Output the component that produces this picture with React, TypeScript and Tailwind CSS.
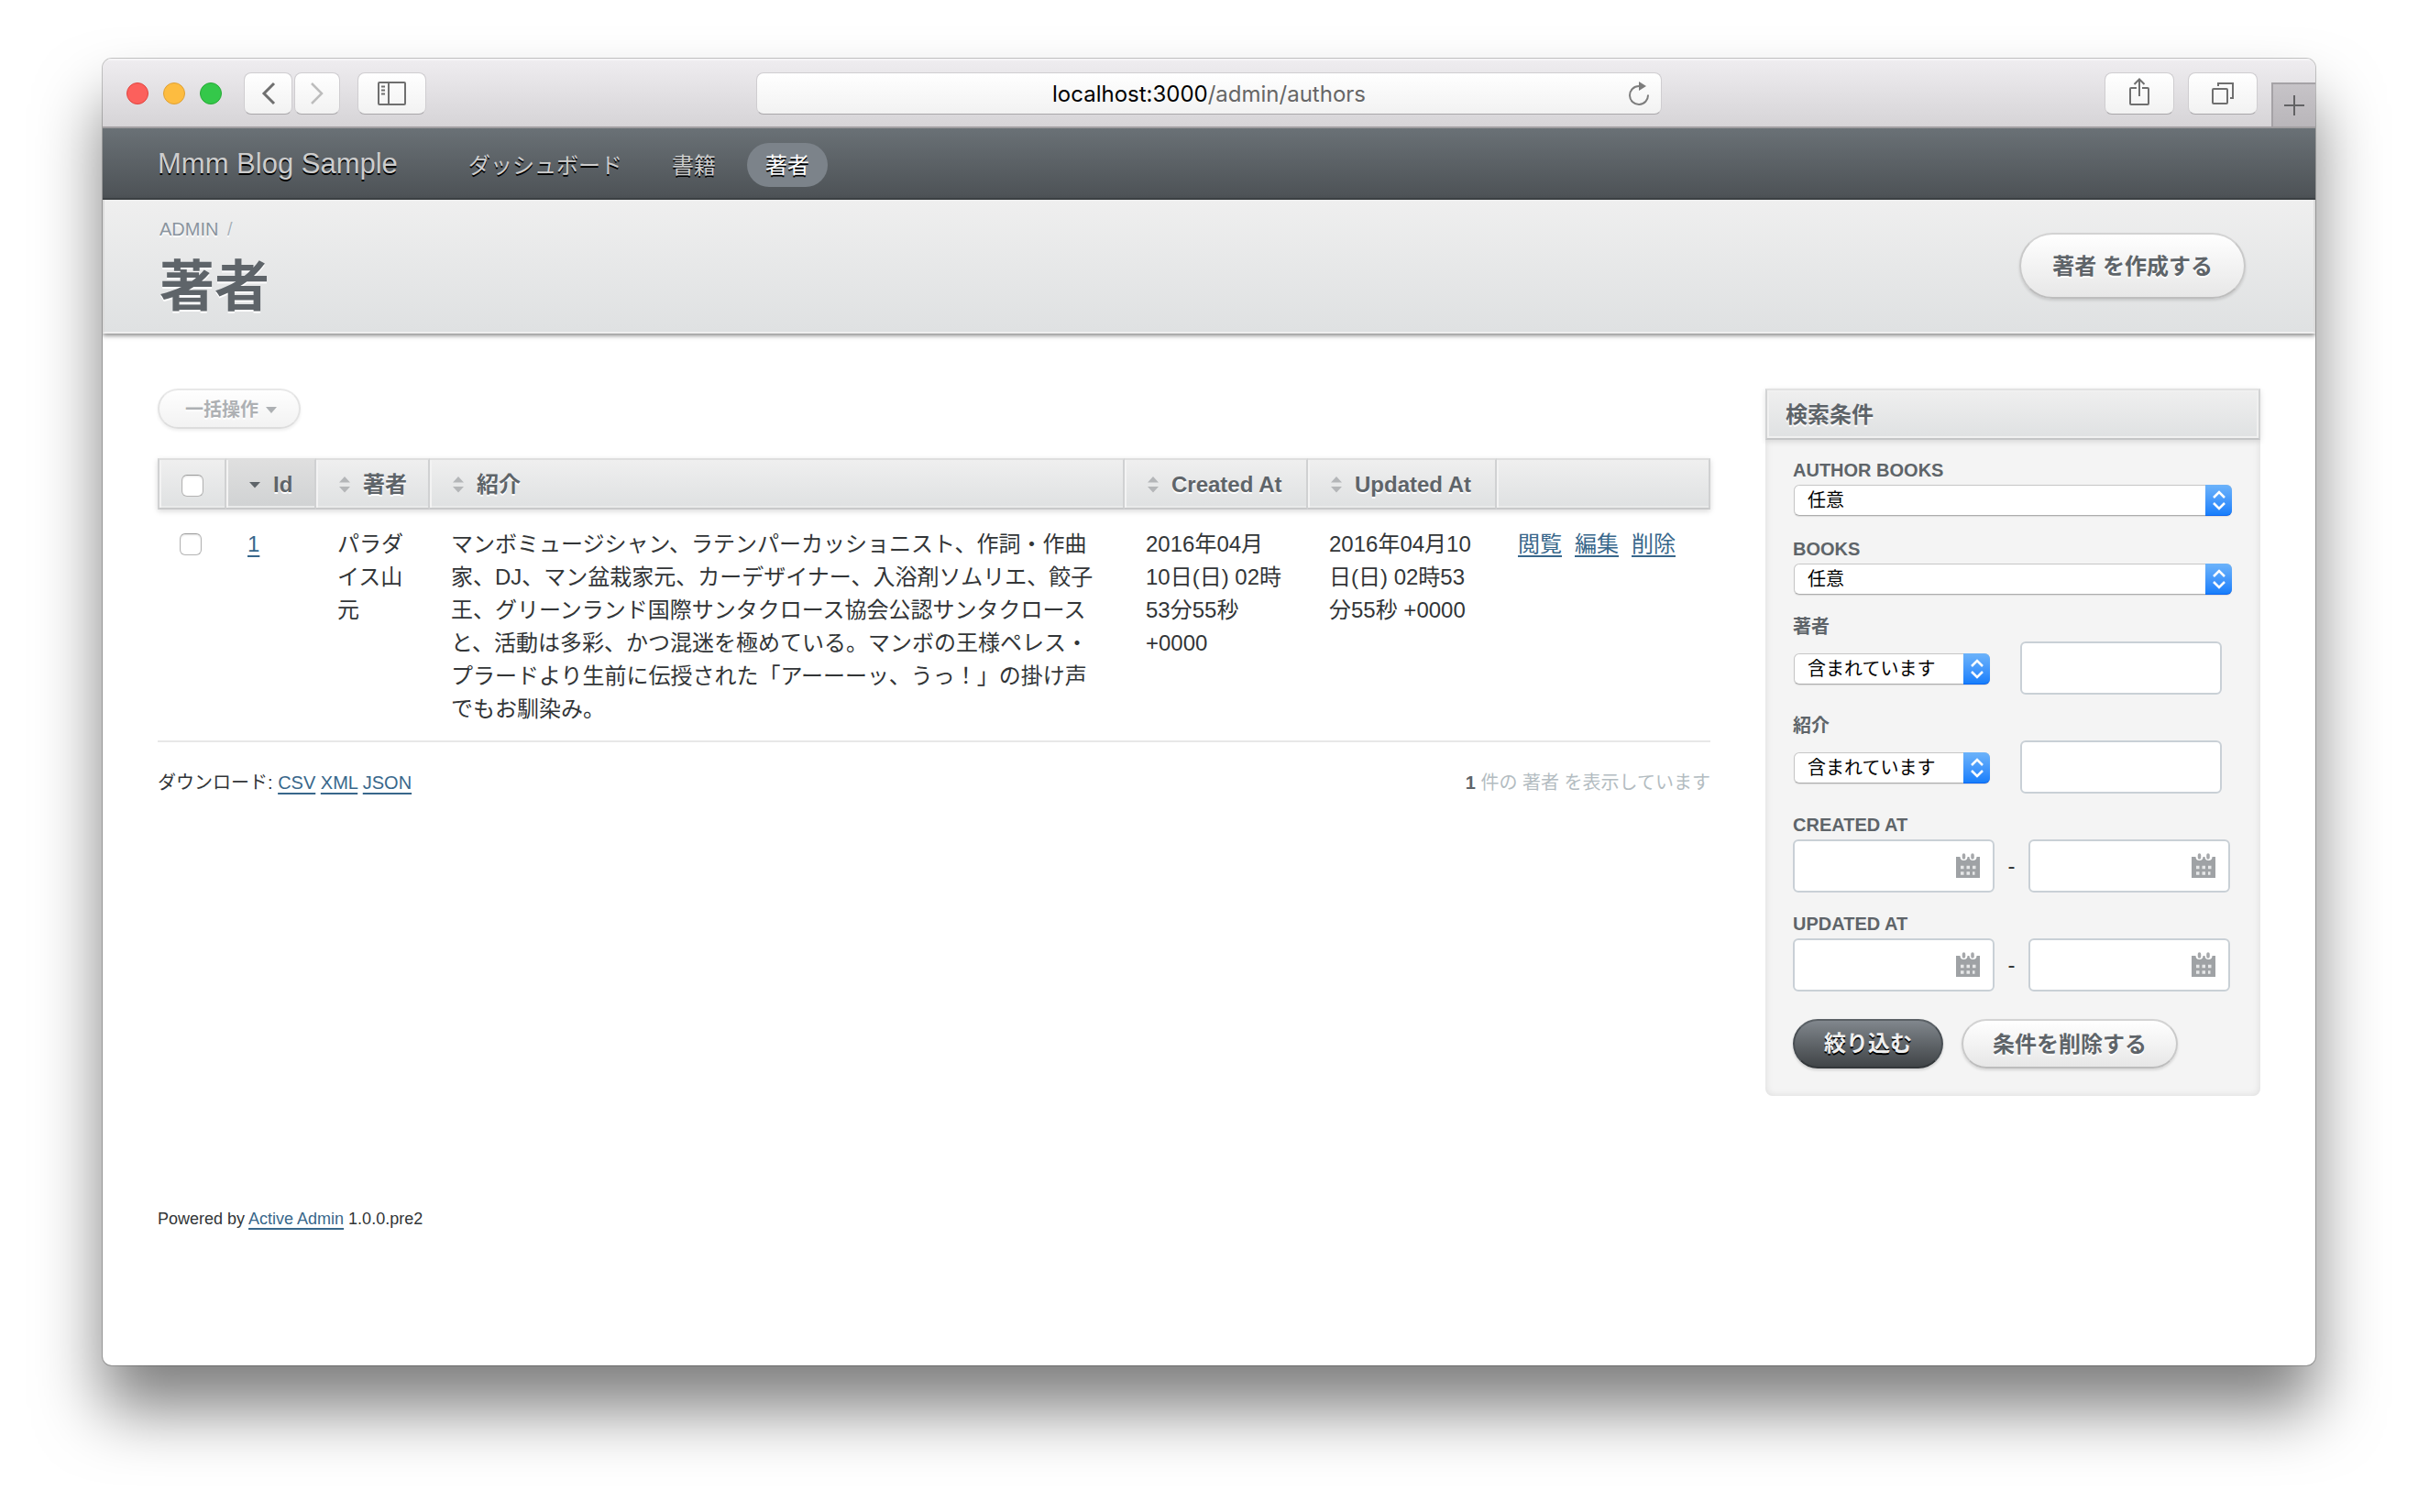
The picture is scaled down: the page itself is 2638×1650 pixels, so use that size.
import React from "react";

const toolButton =
  "flex h-[46px] items-center justify-center rounded-lg border border-[#cfcdd0] border-b-[#a9a7aa] bg-linear-to-b from-white to-[#f2f2f2] text-[#6f6f6f]";

const pill =
  "rounded-full border-2 border-[#c9c9c9] border-t-[#d3d3d3] border-b-[#bdbdbd] bg-linear-to-b from-white to-[#e7e7e7] pt-0.5 font-bold text-[#5e6469] shadow-[0_2px_3px_rgba(0,0,0,0.12)] [text-shadow:0_2px_0_#fff]";

const link = "text-[#38678b] underline decoration-2 underline-offset-4";

const barGradient = "bg-linear-to-b from-[#efefef] to-[#dfe1e2]";

function BrowserBar() {
  return (
    <div className="flex h-[76px] items-center border-b-2 border-[#a19ea1] bg-linear-to-b from-[#efedf0] to-[#d6d4d7] pt-0.5 shadow-[inset_0_2px_0_#f6f5f7]">
      <div className="flex flex-1 items-center">
        <div className="ml-[26px] flex gap-4">
          <span className="size-6 rounded-full border border-[#e0443e] bg-[#fc605c]" />
          <span className="size-6 rounded-full border border-[#dea034] bg-[#fdbc40]" />
          <span className="size-6 rounded-full border border-[#27aa35] bg-[#34c84a]" />
        </div>
        <div className="ml-6 flex gap-0.5">
          <button aria-label="Back" className={`${toolButton} w-[53px]`}>
            <svg width="16" height="26" viewBox="0 0 16 26" fill="none" stroke="currentColor" strokeWidth="3">
              <path d="M14 2 3 13l11 11" />
            </svg>
          </button>
          <button aria-label="Forward" className={`${toolButton} w-[50px]`}>
            <svg width="16" height="26" viewBox="0 0 16 26" fill="none" stroke="#bdbdbd" strokeWidth="2.5">
              <path d="m2 2 11 11L2 24" />
            </svg>
          </button>
        </div>
        <button aria-label="Sidebar" className={`${toolButton} ml-[19px] w-[75px]`}>
          <svg width="32" height="26" viewBox="0 0 32 26" fill="none" stroke="currentColor" strokeWidth="2">
            <rect x="1" y="1" width="29" height="24" rx="1" />
            <path d="M12 1v24M4 5.500h4M4 9.500h4M4 13.500h4" />
          </svg>
        </button>
      </div>
      <div className={`${toolButton} w-[988px] pr-3`}>
        <span className="flex-1 pt-0.5 pl-9 text-center font-[Inter,'Liberation_Sans',sans-serif] text-2xl text-[#666]">
          <span className="text-black">localhost:3000</span>/admin/authors
        </span>
        <button aria-label="Reload">
          <svg width="24" height="28" viewBox="0 0 24 28" fill="none" stroke="#7d7d7d" strokeWidth="2">
            <path d="M22 15.500A10 10 0 1 1 12 6" />
            <path d="M12 1v10l8-5z" fill="#7d7d7d" stroke="none" />
          </svg>
        </button>
      </div>
      <div className="flex flex-1 items-center justify-end self-stretch">
        <button aria-label="Share" className={`${toolButton} w-[76px]`}>
          <svg width="24" height="32" viewBox="0 0 24 32" fill="none" stroke="currentColor" strokeWidth="2" className="mb-1">
            <path d="M9 12H3a1 1 0 0 0-1 1v16a1 1 0 0 0 1 1h18a1 1 0 0 0 1-1V13a1 1 0 0 0-1-1h-6M12 21V2M6.500 8 12 2.500 17.500 8" />
          </svg>
        </button>
        <button aria-label="Show tabs" className={`${toolButton} mx-[15px] w-[76px]`}>
          <svg width="26" height="26" viewBox="0 0 26 26" fill="none" stroke="currentColor" strokeWidth="2">
            <rect x="2" y="8" width="16" height="16" rx="1" />
            <path d="M8 5V2h16v16h-3" />
          </svg>
        </button>
        <button
          aria-label="New tab"
          className="flex size-12 items-center justify-center self-end border-t-2 border-l-2 border-[#a5a2a6] bg-linear-to-b from-[#c6c3c7] to-[#b9b6ba]"
        >
          <svg width="22" height="22" viewBox="0 0 22 22" stroke="#626264" strokeWidth="2">
            <path d="M11 0v22M0 11h22" />
          </svg>
        </button>
      </div>
    </div>
  );
}

function NavBar() {
  const item = "flex h-12 items-center rounded-full px-5 pt-0.5 text-2xl";
  return (
    <header className="flex h-[78px] items-center border-b-2 border-[#3f4448] bg-linear-to-b from-[#6a7176] to-[#4d5256] px-[60px] pt-0.5 text-[#cdcdcd] [text-shadow:0_2px_0_#000]">
      <h1 className="w-[319px] text-[31px] leading-9">Mmm Blog Sample</h1>
      <nav className="flex gap-3.5 pt-0.5">
        <a href="#dashboard" className={item}>ダッシュボード</a>
        <a href="#books" className={item}>書籍</a>
        <a href="#authors" className={`${item} bg-[#7c838a] text-white`}>著者</a>
      </nav>
    </header>
  );
}

function TitleBar() {
  return (
    <div
      className={`relative flex h-[146px] items-center justify-between border-x-2 border-b-2 border-x-[#dcdcdc] border-b-[#efefef] px-[58px] shadow-[0_2px_5px_rgba(0,0,0,0.5)] ${barGradient}`}
    >
      <div className="pt-2 pl-0.5 [text-shadow:0_2px_0_#fff]">
        <div className="text-xl leading-6 text-[#8a949e]">
          <a href="#admin">ADMIN</a> <span className="pl-1 text-[#aab2ba]">/</span>
        </div>
        <h2 className="pt-4 text-[60px] leading-[72px] font-bold text-[#5e6469]">著者</h2>
      </div>
      <button className={`${pill} mr-4 h-[72px] px-[34px] text-2xl`}>著者 を作成する</button>
    </div>
  );
}

function SortIcon({ sorted }: { sorted?: boolean }) {
  return sorted ? (
    <svg width="12" height="18" viewBox="0 0 12 18" fill="#5e6469" aria-hidden="true">
      <path d="M0 6h12L6 12.500z" />
    </svg>
  ) : (
    <svg width="12" height="18" viewBox="0 0 12 18" fill="#b4b6b8" aria-hidden="true">
      <path d="M0 6.500h12L6 0zM0 11h12l-6 6.500z" />
    </svg>
  );
}

function Checkbox({ label }: { label: string }) {
  return (
    <input
      type="checkbox"
      aria-label={label}
      className="block size-6 appearance-none rounded-md border border-[#b4b4b4] border-t-[#9c9c9c] bg-white shadow-[inset_0_1px_2px_rgba(0,0,0,0.12)]"
    />
  );
}

const columns = [
  { name: "Id", sorted: true },
  { name: "著者" },
  { name: "紹介" },
  { name: "Created At" },
  { name: "Updated At" },
];

function AuthorsTable() {
  const head =
    "h-14 border-t-2 border-r-2 border-b-2 border-t-[#dedede] border-r-[#d0d1d2] border-b-[#c8c9ca] p-0 shadow-[inset_2px_0_0_#f3f3f3,inset_0_-2px_0_#e9eaea]";
  const cell = "border-b-2 border-[#e8e8e8] px-[23px] pt-5 pb-4 align-top";
  return (
    <table className="w-full table-fixed border-separate border-spacing-0 text-left text-2xl leading-9 [text-spacing-trim:space-all]">
      <colgroup>
        <col className="w-[75px]" />
        <col className="w-[98px]" />
        <col className="w-[124px]" />
        <col />
        <col className="w-[200px]" />
        <col className="w-[206px]" />
        <col className="w-[233px]" />
      </colgroup>
      <thead className="shadow-[0_2px_6px_rgba(0,0,0,0.15)]">
        <tr>
          <th className={`${head} ${barGradient} border-l-2 border-l-[#d0d1d2] pt-1 pl-6`}>
            <Checkbox label="すべて選択" />
          </th>
          {columns.map((c) => (
            <th
              key={c.name}
              className={`${head} ${c.sorted ? "bg-linear-to-b from-[#dfdfdf] to-[#d0d2d3]" : barGradient}`}
            >
              <a
                href="#sort"
                className="flex items-center gap-3.5 pt-0.5 pl-[25px] whitespace-nowrap text-[#5e6469] [text-shadow:0_2px_0_#fff]"
              >
                <SortIcon sorted={c.sorted} />
                {c.name}
              </a>
            </th>
          ))}
          <th className={`${head} ${barGradient}`} />
        </tr>
      </thead>
      <tbody className="text-[#323537]">
        <tr>
          <td className="border-b-2 border-[#e8e8e8] px-6 pt-[26px] align-top">
            <Checkbox label="1 を選択" />
          </td>
          <td className={cell}>
            <a href="#1" className={link}>1</a>
          </td>
          <td className={cell}>パラダイス山元</td>
          <td className={cell}>
            マンボミュージシャン、ラテンパーカッショニスト、作詞・作曲家、DJ、マン盆栽家元、カーデザイナー、入浴剤ソムリエ、餃子王、グリーンランド国際サンタクロース協会公認サンタクロースと、活動は多彩、かつ混迷を極めている。マンボの王様ペレス・プラードより生前に伝授された「アーーーッ、うっ！」の掛け声でもお馴染み。
          </td>
          <td className={cell}>2016年04月10日(日) 02時53分55秒 +0000</td>
          <td className={cell}>2016年04月10日(日) 02時53分55秒 +0000</td>
          <td className={cell}>
            <div className="flex gap-3.5">
              <a href="#view" className={link}>閲覧</a>
              <a href="#edit" className={link}>編集</a>
              <a href="#delete" className={link}>削除</a>
            </div>
          </td>
        </tr>
      </tbody>
    </table>
  );
}

const fieldLabel = "mb-1 block text-xl leading-6 font-bold text-[#5e6469]";
const textInput = "h-[58px] w-[220px] rounded-md border-2 border-[#c9d0d6] bg-white px-4 text-2xl";

function Select({ id, value, label, wide }: { id: string; value: string; label?: string; wide?: boolean }) {
  return (
    <div className={`relative h-[34px] ${wide ? "mx-px" : "mt-0.5 ml-px w-[214px]"}`}>
      <select
        id={id}
        aria-label={label}
        className="h-full w-full appearance-none rounded-md border border-[#c6c6c6] border-b-[#adadad] bg-white pl-[14px] text-xl leading-7 text-black shadow-[0_1px_1px_rgba(0,0,0,0.1)]"
      >
        <option>{value}</option>
      </select>
      <span className="pointer-events-none absolute inset-y-0 right-0 flex w-[29px] items-center justify-center rounded-r-md border-b border-[#0d66f0] bg-linear-to-b from-[#6cb3fa] to-[#157efb]">
        <svg width="14" height="22" viewBox="0 0 14 22" fill="none" stroke="#fff" strokeWidth="2.500">
          <path d="m1 8 6-6 6 6M1 14l6 6 6-6" />
        </svg>
      </span>
    </div>
  );
}

function SelectField({ id, label }: { id: string; label: string }) {
  return (
    <div className="pt-px pb-px">
      <label htmlFor={id} className={fieldLabel}>{label}</label>
      <Select id={id} value="任意" wide />
    </div>
  );
}

function TextField({ id, label }: { id: string; label: string }) {
  return (
    <div>
      <label htmlFor={id} className={fieldLabel}>{label}</label>
      <div className="flex items-center gap-[33px]">
        <Select id={`${id}-op`} label={`${label} 条件`} value="含まれています" />
        <input id={id} type="text" className={textInput} />
      </div>
    </div>
  );
}

function DateInput({ id, label }: { id: string; label?: string }) {
  return (
    <div className="relative">
      <input id={id} type="text" aria-label={label} className={textInput} />
      <svg
        width="26"
        height="28"
        viewBox="0 0 26 28"
        className="pointer-events-none absolute top-[14px] right-4"
        aria-hidden="true"
      >
        <path d="M0 5h4.500a3.500 3.500 0 0 0 8 0h2a3.500 3.500 0 0 0 8 0H26v23H0z" fill="#9fa2a5" />
        <path d="M8.500 3v3M18 3v3" stroke="#a6a8ab" strokeWidth="3.500" strokeLinecap="round" />
        <path
          d="M5 16.500h3.500M11.500 16.500H15M18 16.500h3.500M5 23h3.500M11.500 23H15M18 23h2.500"
          stroke="#e6e7e8"
          strokeWidth="3.500"
        />
      </svg>
    </div>
  );
}

function DateField({ id, label }: { id: string; label: string }) {
  return (
    <div>
      <label htmlFor={id} className={fieldLabel}>{label}</label>
      <div className="flex items-center">
        <DateInput id={id} />
        <span className="w-[37px] text-center text-2xl">-</span>
        <DateInput id={`${id}-to`} label={`${label} to`} />
      </div>
    </div>
  );
}

function Filters() {
  return (
    <aside className="w-[540px] shrink-0 self-start rounded-b-lg bg-[#f4f4f4] shadow-[inset_0_0_8px_rgba(0,0,0,0.1)]">
      <h3
        className={`h-14 border-2 border-t-[#e2e2e2] border-x-[#d2d3d4] border-b-[#c4c5c6] px-5 text-2xl leading-[54px] font-bold text-[#5e6469] shadow-[0_2px_6px_rgba(0,0,0,0.12),inset_0_0_0_2px_#f0f0f0] [text-shadow:0_2px_0_#fff] ${barGradient}`}
      >
        検索条件
      </h3>
      <form className="flex flex-col gap-[22px] px-[30px] pt-5 pb-[30px]" onSubmit={(e) => e.preventDefault()}>
        <SelectField id="author-books" label="AUTHOR BOOKS" />
        <SelectField id="books" label="BOOKS" />
        <TextField id="name" label="著者" />
        <TextField id="intro" label="紹介" />
        <DateField id="created" label="CREATED AT" />
        <DateField id="updated" label="UPDATED AT" />
        <div className="flex gap-5 pt-2">
          <button className="h-[54px] rounded-full border-2 border-[#484e53] border-t-[#5b6166] border-b-[#33373a] bg-linear-to-b from-[#81878d] to-[#414548] px-8 text-2xl font-bold text-[#efefef] shadow-[0_2px_3px_rgba(0,0,0,0.15)] [text-shadow:0_2px_0_#000]">
            絞り込む
          </button>
          <button className={`${pill} h-[54px] px-8 text-2xl`}>条件を削除する</button>
        </div>
      </form>
    </aside>
  );
}

export default function App() {
  return (
    <div
      lang="ja"
      className="flex min-h-screen flex-col bg-white px-28 pt-16 pb-40 font-['Liberation_Sans','Noto_Sans_CJK_JP',sans-serif] text-[#323537]"
    >
      <div className="flex-1 overflow-hidden rounded-[10px] bg-white shadow-[0_0_0_1px_rgba(0,0,0,0.22),0_48px_70px_rgba(0,0,0,0.5)]">
        <BrowserBar />
        <NavBar />
        <TitleBar />
        <div className="flex gap-[60px] px-[60px] pt-[60px]">
          <main className="min-w-0 flex-1">
            <button
              disabled
              className={`${pill} mb-8 flex h-11 items-center gap-2 pr-6 pl-7 text-xl opacity-50`}
            >
              一括操作
              <svg width="12" height="8" viewBox="0 0 12 8" fill="currentColor" aria-hidden="true">
                <path d="M0 1h12L6 8z" />
              </svg>
            </button>
            <AuthorsTable />
            <div className="flex justify-between pt-[26px] text-xl leading-9">
              <div>
                ダウンロード: <a href="#csv" className={link}>CSV</a> <a href="#xml" className={link}>XML</a>{" "}
                <a href="#json" className={link}>JSON</a>
              </div>
              <div className="text-[#b3bcc1]">
                <b className="text-[#5e6469]">1</b> 件の 著者 を表示しています
              </div>
            </div>
          </main>
          <Filters />
        </div>
        <footer className="px-[60px] pt-[116px] text-lg leading-9">
          Powered by <a href="#active-admin" className={link}>Active Admin</a> 1.0.0.pre2
        </footer>
      </div>
    </div>
  );
}
